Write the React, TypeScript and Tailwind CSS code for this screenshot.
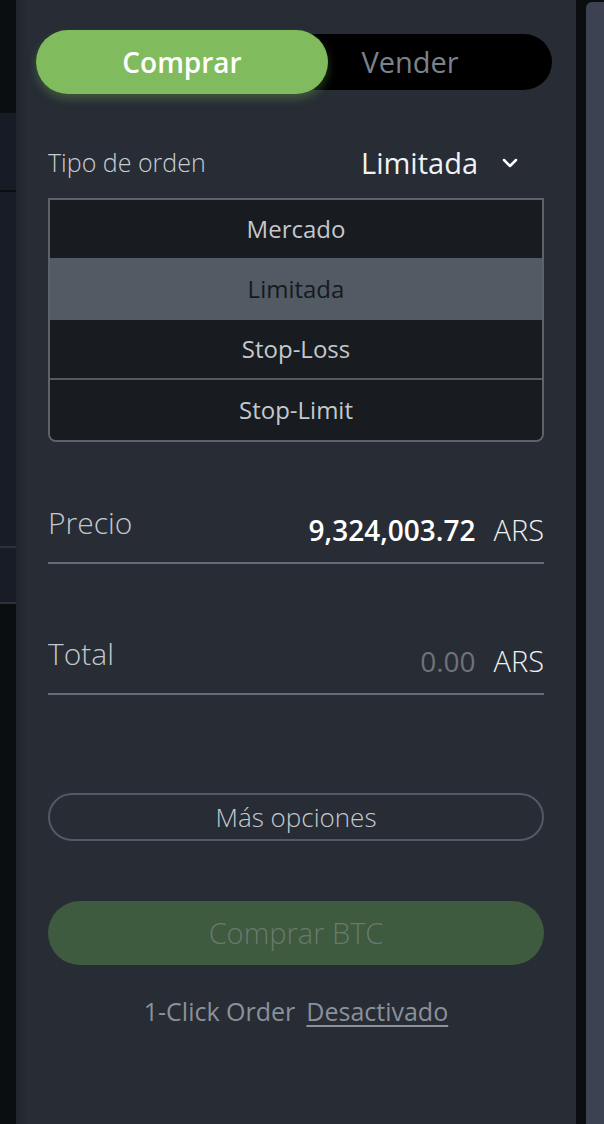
import { ChevronDown } from "lucide-react";

const orderTypes = ["Mercado", "Limitada", "Stop-Loss", "Stop-Limit"];

function LeftStrip() {
  return (
    <div className="flex w-[16px] shrink-0 flex-col">
      <div className="h-[113px] bg-[#0b0e11]" />
      <div className="h-[77px] bg-[#171b25]" />
      <div className="h-[2px] bg-[#0b0e11]" />
      <div className="h-[354px] bg-[#181c26]" />
      <div className="h-[2px] bg-[#2b303b]" />
      <div className="h-[54px] bg-[#181c26]" />
      <div className="h-[2px] bg-[#2b303b]" />
      <div className="flex-1 bg-[#0b0e11]" />
    </div>
  );
}

function Field({ label, value, muted }: { label: string; value: string; muted?: boolean }) {
  return (
    <div className="flex items-end justify-between border-b-2 border-[#646c75] pb-[14px]">
      <span className="mb-[7px] text-[30px] leading-[36px] font-light text-[#c3c8ce]">{label}</span>
      <div className="flex items-baseline gap-[18px]">
        <span
          className={
            muted
              ? "text-[28px] leading-[36px] font-normal text-[#6e7379]"
              : "text-[28px] leading-[36px] font-semibold text-white"
          }
        >
          {value}
        </span>
        <span className="text-[29px] leading-[36px] font-light text-[#eef0f2]">ARS</span>
      </div>
    </div>
  );
}

export default function App() {
  return (
    <div className="flex h-[1124px] w-[604px] overflow-hidden bg-[#0b0e11] font-['Open_Sans','Noto_Sans',sans-serif]">
      <LeftStrip />

      <div className="flex w-[560px] shrink-0 flex-col bg-[linear-gradient(to_right,#21262e,#272c35_12px)] px-[32px]">
        {/* buy / sell toggle */}
        <div className="mt-[34px] mr-[-8px] ml-[-12px] flex h-[56px] items-center rounded-full bg-black">
          <button className="flex h-[64px] w-[292px] shrink-0 items-center justify-center rounded-full bg-[#80bc5e] text-[28px] font-semibold text-white shadow-[0_5px_10px_rgba(110,170,80,0.35)]">
            Comprar
          </button>
          <span className="flex-1 pr-[60px] text-center text-[29px] font-normal text-[#7b828c]">Vender</span>
        </div>

        <div className="mt-[53px] flex h-[40px] items-center justify-between">
          <span className="text-[25px] font-light text-[#c9ced4]">Tipo de orden</span>
          <div className="mr-[22px] flex items-center gap-[20px]">
            <span className="text-[29px] font-medium text-[#f0f2f4]">Limitada</span>
            <ChevronDown className="h-[24px] w-[24px] text-white" strokeWidth={2.5} />
          </div>
        </div>

        <div className="mt-[15px] overflow-hidden rounded-b-[8px] border-2 border-[#5c636d]">
          {orderTypes.map((t, i) => (
            <div
              key={t}
              className={
                t === "Limitada"
                  ? "flex h-[62px] items-center justify-center bg-[#525a64] text-[24px] font-medium text-[#16191d]"
                  : i === 3
                    ? "flex h-[62px] items-center justify-center border-t-2 border-[#525a64] bg-[#181b20] text-[24px] font-medium text-[#c3c8cd]"
                    : "flex h-[58px] items-center justify-center bg-[#181b20] text-[24px] font-medium text-[#c3c8cd]"
              }
            >
              {t}
            </div>
          ))}
        </div>

        <div className="mt-[63px]">
          <Field label="Precio" value="9,324,003.72" />
        </div>
        <div className="mt-[72px]">
          <Field label="Total" value="0.00" muted />
        </div>

        <button className="mt-[98px] flex h-[48px] items-center justify-center rounded-full border-2 border-[#535a64] text-[26px] font-light text-[#c5cad0]">
          Más opciones
        </button>

        <button className="mt-[60px] flex h-[64px] items-center justify-center rounded-full bg-[#3e5a3f] text-[29px] font-light text-[#6a786e]">
          Comprar BTC
        </button>

        <div className="mt-[32px] flex h-[30px] items-center justify-center gap-[11px] text-[25px] text-[#8a9199]">
          <span>1-Click Order</span>
          <span className="underline underline-offset-[4px]">Desactivado</span>
        </div>
      </div>

      <div className="w-[10px] shrink-0 bg-[#0b0e11]" />
      <div className="mt-[2px] flex-1 rounded-tl-[6px] bg-[#3d4252]" />
    </div>
  );
}
